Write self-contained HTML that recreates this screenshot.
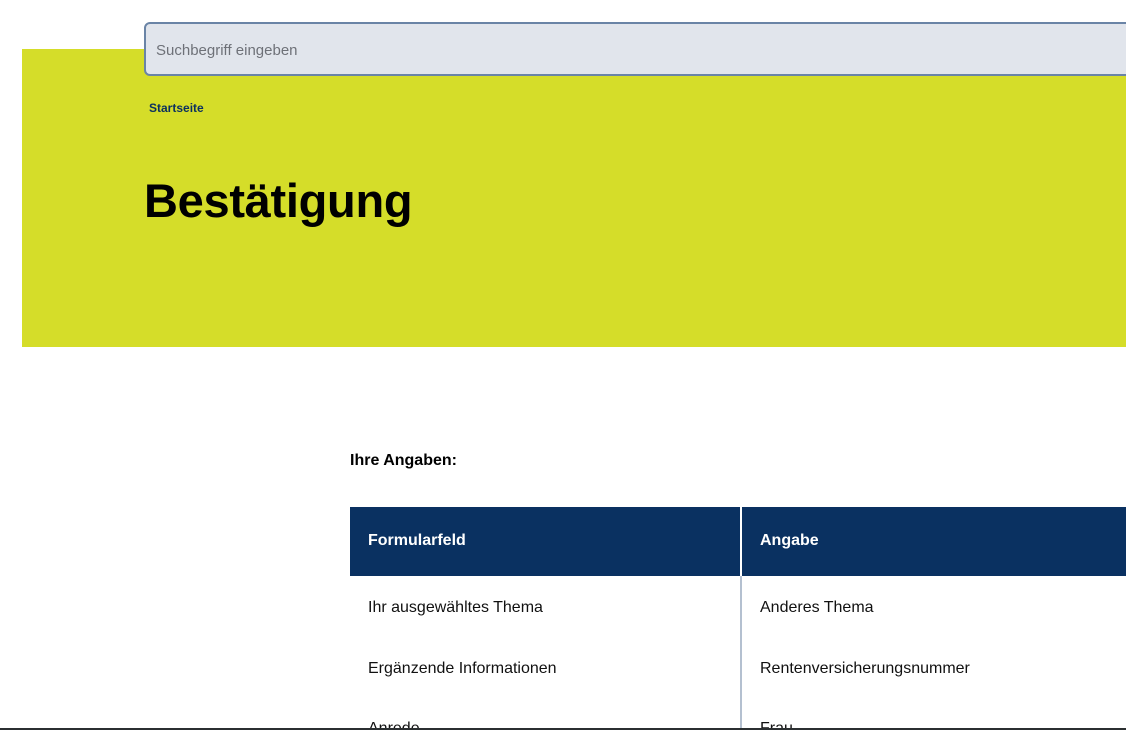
<!DOCTYPE html>
<html><head><meta charset="utf-8"><style>
html,body{margin:0;padding:0;background:#fff;width:1126px;height:730px;overflow:hidden;position:relative;font-family:"Liberation Sans",sans-serif}
.hero{position:absolute;left:22px;top:49px;width:1104px;height:298px;background:#d5dd29}
.search{position:absolute;left:144px;top:22px;width:990px;height:54px;background:#e1e5ec;border:2px solid #6a84a6;border-radius:6px;box-sizing:border-box}
.search span{position:absolute;left:10px;top:18px;font-size:15px;color:#6e7178}
.bc{position:absolute;left:149px;top:101px;font-size:12px;font-weight:bold;color:#0a2f5f}
h1{position:absolute;left:144px;top:171px;margin:0;font-size:47px;font-weight:bold;color:#000;letter-spacing:-0.3px;line-height:60px}
.lbl{position:absolute;left:350px;top:452px;font-size:16px;font-weight:bold;color:#000}
.th{position:absolute;top:507px;height:69px;background:#0a3161;color:#fff;font-weight:bold;font-size:16px}
.th span{position:absolute;left:18px;top:25px}
.div{position:absolute;left:740px;top:576px;width:2px;height:154px;background:#b4c0d0}
.td{position:absolute;font-size:16px;color:#111}
.bottom{position:absolute;left:0;top:728px;width:1126px;height:2px;background:#2b2f31}
</style></head><body>
<div class="hero"></div>
<div class="search"><span>Suchbegriff eingeben</span></div>
<div class="bc">Startseite</div>
<h1>Bestätigung</h1>
<div class="lbl">Ihre Angaben:</div>
<div class="th" style="left:350px;width:390px"><span>Formularfeld</span></div>
<div class="th" style="left:742px;width:384px"><span>Angabe</span></div>
<div class="div"></div>
<div class="td" style="left:368px;top:599px">Ihr ausgewähltes Thema</div>
<div class="td" style="left:760px;top:599px">Anderes Thema</div>
<div class="td" style="left:368px;top:660px">Ergänzende Informationen</div>
<div class="td" style="left:760px;top:660px">Rentenversicherungsnummer</div>
<div class="td" style="left:368px;top:720px">Anrede</div>
<div class="td" style="left:760px;top:720px">Frau</div>
<div class="bottom"></div>
</body></html>
